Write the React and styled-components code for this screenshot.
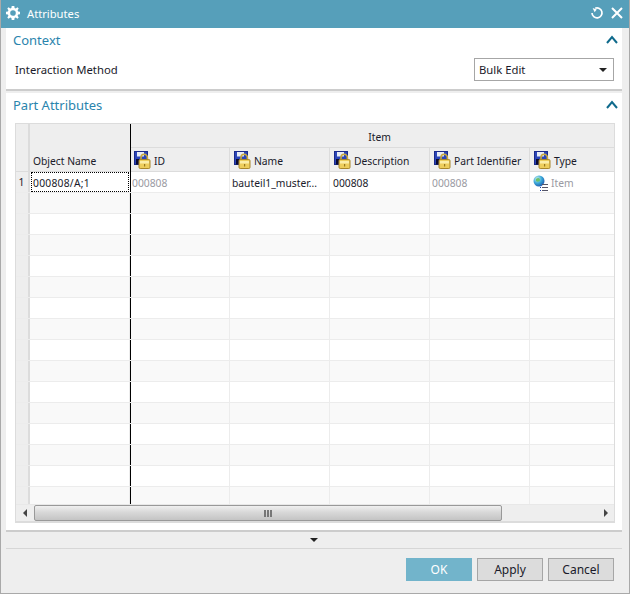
import React from 'react';
import styled, { createGlobalStyle } from 'styled-components';

const Global = createGlobalStyle`
  html, body { margin: 0; padding: 0; background: #fff; }
  * { box-sizing: border-box; }
`;
const font = `Tahoma, "Noto Sans", "DejaVu Sans", sans-serif`;
const gridCols = '14px 100px 1px 99px 100px 100px 100px 84px';
const Win = styled.div`
  width: 630px; height: 594px; background: #eee; display: flex; flex-direction: column;
  border: 1px solid #a9a9a9; border-top: 0; overflow: hidden;
  font: 10.3px ${font}; color: #1a1a2a;
`;
const TitleBar = styled.div`
  height: 28px; flex: none; margin: 0 -1px; background: #569fba; color: #fff; display: flex; align-items: center;
  padding: 0 7px 2px 6px; font-size: 11.2px;
`;
const TitleText = styled.span`margin-left: 7px; flex: 1;`;
const TitleIcons = styled.div`display: flex; gap: 7px; align-items: center;`;
const Body = styled.div`flex: none; padding: 0 7px 0 5px; display: flex; flex-direction: column;`;
const Panel = styled.section`
  background: #fff; height: ${p => p.$h}px; border-bottom: 2px solid #ccc; margin-bottom: ${p => p.$mb || 0}px;
  display: flex; flex-direction: column;
`;
const PanelHead = styled.div`
  height: 25px; display: flex; align-items: center; justify-content: space-between; padding: 0 4px 2px 7px;
  color: #2a84ad; font-size: 13px;
`;
const ContextRow = styled.div`
  display: flex; align-items: center; justify-content: space-between; padding: 5px 8px 0 9px; font-size: 11.3px;
`;
const Select = styled.div`
  width: 140px; height: 23px; border: 1px solid #a6a6a6; display: flex; align-items: center; justify-content: space-between;
  padding: 0 6px 0 4px; background: #fff;
`;
const Caret = styled.span`
  width: 0; height: 0; border-left: 4px solid transparent; border-right: 4px solid transparent; border-top: 4px solid #222;
  display: block;
`;
const GridBox = styled.div`
  margin: 5px 7px 0 9px; width: 600px; height: 400px; border: 1px solid #dcdcdc; border-bottom-width: 2px; background: #fff;
  display: flex; flex-direction: column;
`;
const Head = styled.div`
  display: grid; grid-template-columns: ${gridCols}; grid-template-rows: 24px 24px;
  background: #eee; flex: none;
`;
const Corner = styled.div`grid-row: 1 / 3; grid-column: 1; border-right: 2px solid #dcdcdc; border-bottom: 1px solid #dcdcdc;`;
const ObjHead = styled.div`
  grid-row: 1 / 3; grid-column: 2; display: flex; align-items: flex-end; padding: 0 0 3px 3px; border-bottom: 1px solid #dcdcdc;
`;
const Freeze = styled.div`grid-row: 1 / 3; grid-column: 3; background: #000;`;
const Group = styled.div`
  grid-row: 1; grid-column: 4 / 9; display: flex; align-items: center; justify-content: center; padding: 2px 0 0 14px;
  border-bottom: 1px solid #dcdcdc;
`;
const ColHead = styled.div`
  grid-row: 2; border-right: 1px solid #dcdcdc; border-bottom: 1px solid #dcdcdc; display: flex; align-items: center; gap: 3px;
  padding: 0 0 0 ${p => p.$pad}px; white-space: nowrap;
  &:last-child { border-right: 0; }
  span { padding-top: 2px; }
`;
const Rows = styled.div`flex: 1; overflow: hidden;`;
const Row = styled.div`
  height: 21px; display: grid; grid-template-columns: ${gridCols};
  background: ${p => (p.$alt ? '#f9f9f9' : '#fff')}; border-bottom: 1px solid #ececec;
`;
const RowNum = styled.div`
  background: #eee; border-right: 2px solid #dcdcdc; display: flex; align-items: center; justify-content: center;
  padding-right: 1px;
`;
const Cell = styled.div`
  display: flex; align-items: center; gap: 1px; padding: 1px 0 0 ${p => p.$pad ?? 2}px; border-right: 1px solid #ececec; white-space: nowrap;
  color: ${p => (p.$dim ? '#9a9aa2' : 'inherit')};
  &:last-child { border-right: 0; }
`;
const ActiveCell = styled(Cell)`
  border: 1px dotted #000; margin: 0 1px 0 1px; padding: 1px 0 0 1px; letter-spacing: 0.25px;
`;
const Line = styled.div`background: #000;`;
const Scroll = styled.div`
  height: 17px; flex: none; display: flex; align-items: stretch; background: #eee; border-top: 1px solid #e8e8e8;
`;
const ScrollBtn = styled.div`
  width: ${p => p.$w}px; flex: none; display: flex; align-items: center; justify-content: center;
`;
const Tri = styled.span`
  width: 0; height: 0; border-top: 4px solid transparent; border-bottom: 4px solid transparent;
  ${p => (p.$dir === 'l' ? 'border-right: 4px solid #444;' : 'border-left: 4px solid #444;')}
`;
const Thumb = styled.div`
  width: 468px; border: 1px solid #999; border-radius: 2px; background: linear-gradient(#f0f0f0, #d8d8d8 45%, #c4c4c4);
  display: flex; align-items: center; justify-content: center; gap: 1px;
`;
const Grip = styled.span`width: 2px; height: 7px; background: #777;`;
const Track = styled.div`flex: 1;`;
const Expander = styled.div`height: 16px; flex: none; display: flex; align-items: center; justify-content: center;`;
const Footer = styled.div`
  flex: 1; margin: 0 7px 0 5px; border-top: 1px solid #d6d6d6; display: flex; justify-content: flex-end; gap: 5px; padding: 9px 8px 0 0;
`;
const Btn = styled.div`
  width: 66px; height: 23px; display: flex; align-items: center; justify-content: center; font-size: 12px;
  background: ${p => (p.$primary ? '#72b4cb' : '#dcdcdc')}; color: ${p => (p.$primary ? '#fff' : '#1a1a2a')};
  border: 1px solid ${p => (p.$primary ? '#72b4cb' : '#a6a6a6')};
`;

const Gear = () => (
  <svg width="14" height="14" viewBox="0 0 14 14" fill="#fff">
    <path fillRule="evenodd" d="M5.7 0h2.6l.3 1.9 1.2.5L11.4 1.3l1.3 1.3-1.1 1.6.5 1.2 1.9.3v2.6l-1.9.3-.5 1.2 1.1 1.6-1.3 1.3-1.6-1.1-1.2.5-.3 1.9H5.7l-.3-1.9-1.2-.5-1.6 1.1-1.3-1.3 1.1-1.6-.5-1.2L0 8.3V5.7l1.9-.3.5-1.2-1.1-1.6 1.3-1.3 1.6 1.1 1.2-.5zM7 4.2a2.8 2.8 0 1 0 0 5.6 2.8 2.8 0 0 0 0-5.6z" />
  </svg>
);
const Refresh = () => (
  <svg width="14" height="14" viewBox="0 0 14 14" fill="none">
    <path d="M5.2 2.2A5 5 0 1 1 2 7" stroke="#fff" strokeWidth="1.7" />
    <path d="M2 2.6h4.4L5.4 6z" fill="#fff" transform="rotate(20 4 4)" />
  </svg>
);
const Close = () => (
  <svg width="12" height="12" viewBox="0 0 12 12"><path d="M1 1l10 10M11 1L1 11" stroke="#fff" strokeWidth="2" /></svg>
);
const Chevron = () => (
  <svg width="12" height="9" viewBox="0 0 12 9" fill="none"><path d="M1 8l5-6 5 6" stroke="#0f6a8c" strokeWidth="2" /></svg>
);
const LockIcon = () => (
  <svg width="17" height="18" viewBox="0 0 17 18" style={{ flex: 'none' }}>
    <rect x="0.5" y="0.5" width="13" height="13" fill="#2b45b8" stroke="#1a2a8a" />
    <rect x="3" y="1" width="7" height="4.5" fill="#e6ebf7" />
    <rect x="2" y="8" width="7" height="5.5" fill="#0a0a30" />
    <path d="M7 9V6.5a3.2 3.2 0 0 1 6.4 0V9" fill="none" stroke="#c9a93e" strokeWidth="1.6" />
    <rect x="5" y="8.5" width="11" height="9" rx="1.2" fill="#edce5c" stroke="#a8862a" />
    <rect x="6" y="10" width="9" height="2.5" fill="#fbeea8" />
    <rect x="10" y="13" width="1.2" height="2.5" fill="#9a7a20" />
  </svg>
);
const TypeIcon = () => (
  <svg width="17" height="16" viewBox="0 0 17 16" style={{ flex: 'none' }}>
    <defs>
      <radialGradient id="g" cx="0.35" cy="0.3" r="0.8">
        <stop offset="0" stopColor="#c8f0e8" />
        <stop offset="0.5" stopColor="#3aa8d8" />
        <stop offset="1" stopColor="#1a4ea8" />
      </radialGradient>
    </defs>
    <circle cx="6" cy="6" r="5.5" fill="url(#g)" />
    <path d="M3 4c2-2 4-1 4 1s-3 2-4 1z" fill="#6cc06a" />
    <path d="M9 9.5h6M9 12.5h6M9 15.5h6" stroke="#556" strokeWidth="1" />
    <path d="M7 12.5h1M7 15.5h1" stroke="#1a3ea8" strokeWidth="1" />
  </svg>
);

const cols = ['ID', 'Name', 'Description', 'Part Identifier', 'Type'];

export default function App() {
  return (
    <>
      <Global />
      <Win>
        <TitleBar>
          <Gear />
          <TitleText>Attributes</TitleText>
          <TitleIcons><Refresh /><Close /></TitleIcons>
        </TitleBar>
        <Body>
          <Panel $h={63} $mb={2}>
            <PanelHead>Context<Chevron /></PanelHead>
            <ContextRow>
              <span>Interaction Method</span>
              <Select>Bulk Edit<Caret /></Select>
            </ContextRow>
          </Panel>
          <Panel $h={439}>
            <PanelHead>Part Attributes<Chevron /></PanelHead>
            <GridBox>
              <Head>
                <Corner />
                <ObjHead>Object Name</ObjHead>
                <Freeze />
                <Group>Item</Group>
                {cols.map((c, i) => <ColHead key={c} $pad={i === 0 ? 3 : 4}><LockIcon /><span>{c}</span></ColHead>)}
              </Head>
              <Rows>
                <Row>
                  <RowNum>1</RowNum>
                  <ActiveCell>000808/A;1</ActiveCell>
                  <Line />
                  <Cell $dim $pad={1}>000808</Cell>
                  <Cell>bauteil1_muster...</Cell>
                  <Cell $pad={3}>000808</Cell>
                  <Cell $dim>000808</Cell>
                  <Cell $dim $pad={3}><TypeIcon />Item</Cell>
                </Row>
                {Array.from({ length: 15 }, (_, i) => (
                  <Row key={i} $alt={i % 2 === 0}>
                    <RowNum />
                    <Cell />
                    <Line />
                    <Cell /><Cell /><Cell /><Cell /><Cell />
                  </Row>
                ))}
              </Rows>
              <Scroll>
                <ScrollBtn $w={18}><Tri $dir="l" /></ScrollBtn>
                <Thumb><Grip /><Grip /><Grip /></Thumb>
                <Track />
                <ScrollBtn $w={16}><Tri $dir="r" /></ScrollBtn>
              </Scroll>
            </GridBox>
          </Panel>
          <Expander><Caret /></Expander>
        </Body>
        <Footer>
          <Btn $primary>OK</Btn>
          <Btn>Apply</Btn>
          <Btn>Cancel</Btn>
        </Footer>
      </Win>
    </>
  );
}
